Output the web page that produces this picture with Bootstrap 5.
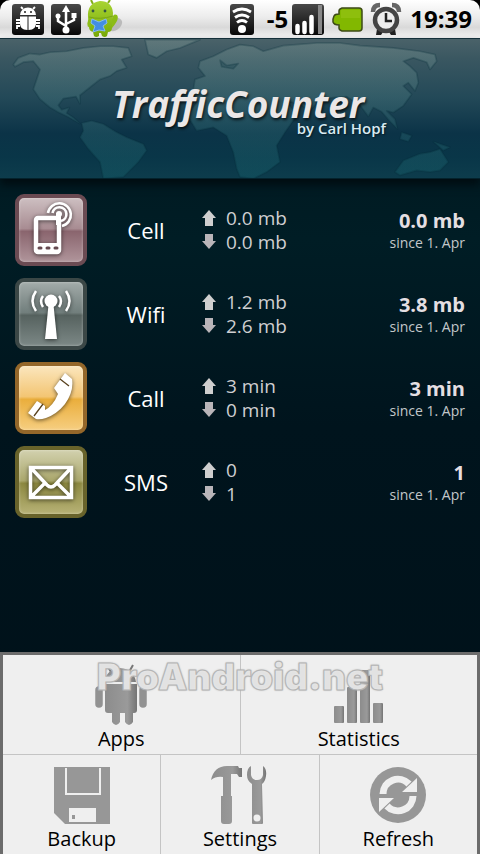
<!DOCTYPE html>
<html lang="en">
<head>
<meta charset="utf-8">
<meta name="viewport" content="width=device-width, initial-scale=1">
<title>TrafficCounter</title>
<link href="https://cdn.jsdelivr.net/npm/bootstrap@5.3.0/dist/css/bootstrap.min.css" rel="stylesheet">
<style>
body{font-family:"Open Sans","Noto Sans",sans-serif;background:#000}
.app-screen{background:linear-gradient(#00141b 0,#001d25 28%,#00141d 50%,#001018 100%)}
.status-strip{background:linear-gradient(#fff,#ececec 45%,#d9d9d9 72%,#f4f4f4);border-radius:10px 10px 0 0;height:38px;color:#000;padding:0 8px 0 11px}
.status-strip svg{display:block;flex:none}
.status-num{font-size:24px;font-weight:700;line-height:36px}
.hero{height:141px;background:linear-gradient(#4a6269 0,#3a5761 14%,#234958 42%,#0b3347 68%,#093648 85%,#0d3c4c 100%);border-top:1px solid #14303a;border-bottom:1px solid #04222c;box-shadow:0 6px 8px #000d12}
.hero-map{position:absolute;inset:0;width:100%;height:100%}
.hero-title{font-size:37px;line-height:40px;font-weight:700;font-style:italic;color:#ebe7e7;text-shadow:1px 2px 3px #000b}
.hero-by{font-size:15px;line-height:8px;font-weight:600;color:#d8eaf2;text-shadow:1px 1px 2px #0008}
.hero-block{padding:45px 0 0 14px}
.hero-inner{width:278px}
.meters{padding:15px 15px 0}
.meter{height:72px;margin-bottom:12px}
.tile{width:72px;height:72px;border-radius:9px;border:4px solid;flex:none}
.tile svg{display:block;filter:drop-shadow(0 1px 2px #0009)}
.tile-cell{border-color:#6b4b53;background:linear-gradient(#cdbfc1,#a88c92 48%,#8a656e 52%,#b0959b)}
.tile-wifi{border-color:#3b4746;background:linear-gradient(#a2aba9,#717e7c 48%,#56625f 52%,#7c8886)}
.tile-call{border-color:#94672a;background:linear-gradient(#fbe6bd,#f3c573 48%,#eaae3c 52%,#f6ce80)}
.tile-sms{border-color:#68632b;background:linear-gradient(#d2d1ae,#aaa76c 48%,#8c8840 52%,#b7b276)}
.tile-cell,.tile-wifi,.tile-call,.tile-sms{background-clip:border-box;box-shadow:inset 0 0 3px #fff6}
.meter-name{width:114px;padding-left:4px;font-size:22px;color:#fff}
.meter-io{font-size:19px;line-height:24px;color:#cfcfd1}
.io-line{gap:9px}
.meter-total{font-size:20px;line-height:24px;font-weight:700;color:#e4dfe2}
.meter-since{font-size:14px;line-height:20px;color:#c3c7ca}
.meter-sum{padding-top:2px}
.options{background:#efefef;border:3px solid #6c6c6c;border-bottom:0}
.option{height:99px;border:0;background:none;font-size:20px;line-height:26px;color:#000;padding:6px 0 0;flex:1 1 0}
.option + .option{border-left:1px solid #c4c4c4}
.option-row + .option-row{border-top:1px solid #c4c4c4}
.option svg{display:block;margin:0 auto 1px}
.stamp{position:absolute;top:-4px;left:0;right:0;text-align:center;font-family:Inter,"Open Sans",sans-serif;font-size:37px;line-height:52px;font-weight:900;color:#f4f4f4d0;-webkit-text-stroke:1px #b4b4b4;text-shadow:0 0 2px #999;pointer-events:none}
</style>
<script src="https://cdn.jsdelivr.net/npm/bootstrap@5.3.0/dist/js/bootstrap.bundle.min.js"></script>
</head>
<body>
<svg width="0" height="0" class="position-absolute" aria-hidden="true">
<defs>
<linearGradient id="dark" x2="0" y2="1"><stop stop-color="#484848"/><stop offset="1" stop-color="#080808"/></linearGradient>
<linearGradient id="leaf" x2="0" y2="1"><stop stop-color="#a8d432"/><stop offset="1" stop-color="#78aa08"/></linearGradient>
<linearGradient id="steel" x2="1" y2="0"><stop stop-color="#8c8c8c"/><stop offset=".7" stop-color="#9a9a9a"/><stop offset="1" stop-color="#747474"/></linearGradient>
<symbol id="arrow-up" viewBox="0 0 16 18"><path d="M8 1 15 9H12V17H4V9H1Z" fill="#cfcfcf"/></symbol>
<symbol id="arrow-down" viewBox="0 0 16 18"><path d="M8 16 15 8H12V1H4V8H1Z" fill="#b9b5b9"/></symbol>
</defs>
</svg>
<div class="app-screen min-vh-100 d-flex flex-column">
<div class="bg-black">
<div class="status-strip d-flex align-items-center">
<svg width="34" height="34" viewBox="0 0 34 34"><rect x="1" y="2" width="32" height="31" rx="3" fill="url(#dark)"/><path d="M9 13a8 7.500 0 0 1 16 0zM9 14.500h7.500V28C11 28 9 25 9 21zM17.500 14.500H25V21c0 4-2 7-7.500 7z" fill="#fff"/><path d="m12 7-2-2m12 2 2-2M9 18H5m4 3H5m4 3H6v3m19-9h4m-4 3h4m-4 3h3v3" stroke="#fff" stroke-width="1.800" fill="none"/><path d="M13 10h2m4 0h2" stroke="#222" stroke-width="1.500"/></svg>
<svg class="ms-1" width="34" height="34" viewBox="0 0 34 34"><rect x="2" y="2" width="30" height="31" rx="3" fill="url(#dark)"/><path d="M17 28V9M17 24l-8-5v-5m8 8 8-4v-4" stroke="#fff" stroke-width="2.500" fill="none"/><path d="m17 3 4 7h-8z" fill="#fff"/><circle cx="17" cy="28" r="3.500" fill="#fff"/><circle cx="9" cy="14" r="2.500" fill="#fff"/><path d="M22.500 11h5v5h-5z" fill="#fff"/></svg>
<svg class="ms-1" width="40" height="38" viewBox="0 0 40 38"><path d="M28 17q10 2 6 9-4 6-10 5z" fill="#aaa" opacity=".7"/><path d="m6 4-2-4m17 3 2-3" stroke="#82ae17" stroke-width="2"/><path d="M1 17Q0 3 13 1q12 0 13 12l-1 15q0 4-4 4l-1 4q-2 2-5 0l-1-3h-2v3q-3 2-5 0l-1-4q-4-1-4-5z" fill="url(#leaf)"/><path d="M25 19q1-6 5-4 3 4-5 13M3 18q-4 3-2 9l3-1" fill="#8cbc16"/><circle cx="6" cy="11" r="1.400" fill="#354"/><circle cx="18" cy="11" r="1.400" fill="#354"/><path d="M2 17q11 3 24-1" stroke="#79a516" fill="none"/><path d="m5 19 7 3 7-3 1 4-4 3 2 5-6-1-6 2 2-6-4-3z" fill="#438ee4" stroke="#86bcf0"/></svg>
<div class="ms-auto d-flex align-items-center">
<svg width="26" height="34" viewBox="0 0 26 34"><rect x="1" y="2" width="24" height="31" rx="3" fill="url(#dark)"/><path d="M4 10q9-6 18 0M6 15.500q7-5 14 0M8 20.500q5-4 10 0" stroke="#fff" stroke-width="2.800" fill="none"/><circle cx="13" cy="27" r="4" fill="#fff"/></svg>
<span class="status-num ps-2 ms-1">-5</span>
<svg class="ms-1" width="34" height="34" viewBox="0 0 34 34"><rect x="0" y="2" width="32" height="31" rx="3" fill="url(#dark)"/><path d="M26 3h4v29h-4z" fill="#888"/><path d="M5.500 30v-6m7 6V21m7 9V15" stroke="#fff" stroke-width="4.500" stroke-linecap="round"/></svg>
<svg class="ms-1" width="36" height="34" viewBox="0 0 36 34"><path d="M9 9q0-2 3-3h17q3 0 3 3v17q0 3-3 3H12q-3-1-3-3v-3q-5 0-6-3v-3l1-3q1-2 5-2z" fill="#82b800" stroke="#3d4a16" stroke-width="1.500"/><path d="M11 8h19v8H11z" fill="#a0cb20" opacity=".4"/></svg>
<svg class="ms-1" width="32" height="36" viewBox="0 0 32 36"><path d="M3 11Q3 4 10 4M22 4q7 0 7 7" stroke="#666" stroke-width="4.500" fill="none"/><path d="m7 28-1 6h5l2-3m12-3 1 6h-5l-2-3" fill="#222"/><circle cx="16" cy="19" r="11" fill="#eee" stroke="#444" stroke-width="4.500"/><path d="M16 12v8h6" stroke="#222" stroke-width="2.500" fill="none"/></svg>
<span class="status-num ms-2">19:39</span>
</div>
</div>
</div>
<header class="hero position-relative flex-shrink-0 d-flex justify-content-center">
<svg class="hero-map" viewBox="0 0 480 140" preserveAspectRatio="none" aria-hidden="true">
<defs><linearGradient id="land" gradientUnits="userSpaceOnUse" x1="0" y1="0" x2="0" y2="430"><stop stop-color="#8aa09c" stop-opacity=".36"/><stop offset=".5" stop-color="#4a8085" stop-opacity=".3"/><stop offset="1" stop-color="#1c7a82" stop-opacity=".24"/></linearGradient></defs>
<g transform="scale(.33333) translate(0 -8)" fill="url(#land)" stroke="#052a38" stroke-opacity=".25" stroke-width="5" stroke-linejoin="round">
<path d="M40 85 55 65 90 52 120 55 150 48 200 45 250 35 300 30 340 30 385 35 395 60 365 70 380 95 350 105 330 120 300 130 275 150 240 178 240 204 228 182 190 188 175 208 185 222 208 215 200 232 220 245 240 264 205 244 175 229 150 215 120 190 100 160 110 130 120 100 100 75 70 78 45 92Z"/>
<path d="M245 262 275 255 310 265 350 290 380 305 430 325 440 345 415 380 395 400 370 425 310 430 300 380 265 340 240 305 250 285Z"/>
<path d="M435 10H600L540 35 500 45 470 65 445 55Z"/>
<path d="M580 160 585 130 615 120 595 95 600 75 640 60 680 40 720 25 760 30 790 45 850 28 950 20 1020 20 1080 28 1180 35 1260 45 1305 55 1310 75 1290 100 1280 78 1240 65 1210 75 1230 90 1250 110 1255 140 1245 165 1225 140 1210 150 1235 175 1210 210 1180 230 1160 225 1185 250 1192 280 1168 255 1145 228 1120 215 1105 242 1080 208 1040 182 1000 185 960 190 930 225 900 205 860 195 890 240 855 290 830 330 840 380 800 410 760 430 720 425 710 400 700 350 680 300 640 275 590 285 562 240 590 200Z"/>
<path d="M1185 410 1210 375 1260 355 1290 350 1320 340 1345 380 1320 405 1290 410 1250 405 1200 420ZM1205 290 1235 300 1225 318 1200 310ZM1300 318 1350 335 1330 345Z"/>
<path d="M660 72 680 88 715 82 700 98 665 92Z" fill="#0b3442" fill-opacity=".3"/>
</g>
</svg>
<div class="hero-block position-relative">
<div class="hero-inner">
<h1 class="hero-title m-0 ps-1">TrafficCounter</h1>
<div class="hero-by text-end">by Carl Hopf</div>
</div>
</div>
</header>
<main class="meters flex-grow-1">
<section class="meter d-flex align-items-center">
<div class="tile tile-cell"><svg width="64" height="64" viewBox="0 0 64 64"><rect x="17" y="20" width="23" height="34" rx="2" fill="none" stroke="#fff" stroke-width="4.500"/><path d="M17 45h23v10H17z" fill="#fff"/><path d="M37 15h5v12h-5z" fill="#fff"/><circle cx="40" cy="16" r="3" fill="#fff"/><path d="M33.500 15A7 7 0 1 1 42 23M29 15A11.500 11.500 0 1 1 43 28" fill="none" stroke="#fff" stroke-width="2.600"/><path d="M20 50h2m6 0h2m6 0h2" stroke="#65494f" stroke-width="3" stroke-linecap="round"/></svg></div>
<div class="meter-name text-center flex-shrink-0">Cell</div>
<div class="meter-io flex-grow-1"><div class="io-line d-flex align-items-center"><svg width="16" height="18"><use href="#arrow-up"/></svg>0.0 mb</div><div class="io-line d-flex align-items-center"><svg width="16" height="18"><use href="#arrow-down"/></svg>0.0 mb</div></div>
<div class="meter-sum text-end"><div class="meter-total">0.0 mb</div><div class="meter-since">since 1. Apr</div></div>
</section>
<section class="meter d-flex align-items-center">
<div class="tile tile-wifi"><svg width="64" height="64" viewBox="0 0 64 64"><circle cx="32" cy="19" r="6.500" fill="#fff"/><path d="M29.500 23h5L38 57H26z" fill="#fff"/><path d="M24 14q-4 5 0 11m16-11q4 5 0 11M17 9q-7 10 0 20M47 9q7 10 0 20" fill="none" stroke="#fff" stroke-width="2.500"/></svg></div>
<div class="meter-name text-center flex-shrink-0">Wifi</div>
<div class="meter-io flex-grow-1"><div class="io-line d-flex align-items-center"><svg width="16" height="18"><use href="#arrow-up"/></svg>1.2 mb</div><div class="io-line d-flex align-items-center"><svg width="16" height="18"><use href="#arrow-down"/></svg>2.6 mb</div></div>
<div class="meter-sum text-end"><div class="meter-total">3.8 mb</div><div class="meter-since">since 1. Apr</div></div>
</section>
<section class="meter d-flex align-items-center">
<div class="tile tile-call"><svg width="64" height="64" viewBox="0 0 64 64"><path d="m46 7 7 6q2 12-7 25-8 10-19 14-6 2-10 1L9 47l9-12 8 5v4q8-4 13-16l-4-6Z" fill="#fff"/><path d="m41 13 9 7M15 50l9-12" stroke="#5a4320" stroke-width="1.300"/></svg></div>
<div class="meter-name text-center flex-shrink-0">Call</div>
<div class="meter-io flex-grow-1"><div class="io-line d-flex align-items-center"><svg width="16" height="18"><use href="#arrow-up"/></svg>3 min</div><div class="io-line d-flex align-items-center"><svg width="16" height="18"><use href="#arrow-down"/></svg>0 min</div></div>
<div class="meter-sum text-end"><div class="meter-total">3 min</div><div class="meter-since">since 1. Apr</div></div>
</section>
<section class="meter d-flex align-items-center">
<div class="tile tile-sms"><svg width="64" height="64" viewBox="0 0 64 64"><path d="M11.500 17.500h41v30h-41zM12 18l16 17q4 4 8 0l16-17M12 47l14-14m26 14L38 33" fill="none" stroke="#fff" stroke-width="3.500"/></svg></div>
<div class="meter-name text-center flex-shrink-0">SMS</div>
<div class="meter-io flex-grow-1"><div class="io-line d-flex align-items-center"><svg width="16" height="18"><use href="#arrow-up"/></svg>0</div><div class="io-line d-flex align-items-center"><svg width="16" height="18"><use href="#arrow-down"/></svg>1</div></div>
<div class="meter-sum text-end"><div class="meter-total">1</div><div class="meter-since">since 1. Apr</div></div>
</section>
</main>
<nav class="options position-relative" aria-label="Options">
<div class="option-row d-flex">
<button type="button" class="option"><svg width="60" height="62" viewBox="0 0 60 62"><path d="m20 9-4-7m22 7 4-7" stroke="#777" stroke-width="2"/><path d="M14 19Q15 6 29 5q14 1 16 14zM14 21h32v26q0 3-3 3h-1v9q-4 6-8 0v-9h-5v9q-4 6-8 0v-9h-4q-3 0-3-3z" fill="url(#steel)"/><path d="M8 27v14m44-14v14" stroke="#929292" stroke-width="7.500" stroke-linecap="round"/></svg>Apps</button>
<button type="button" class="option"><svg width="60" height="62" viewBox="0 0 60 62"><g fill="url(#steel)"><rect x="5" y="43" width="10" height="17" rx="1"/><rect x="18" y="24" width="10" height="36" rx="1"/><rect x="31" y="7" width="10" height="53" rx="1"/><rect x="44" y="40" width="10" height="20" rx="1"/></g></svg>Statistics</button>
</div>
<div class="option-row d-flex">
<button type="button" class="option"><svg width="60" height="62" viewBox="0 0 60 62"><path d="M2 4h56v57H13L2 50z" fill="#979797"/><path d="M14 5v26h34V5" fill="none" stroke="#efefef" stroke-width="2"/><path d="M17 45h27v14H17z" fill="#efefef"/><path d="M20 52h3v4h-3z" fill="#979797"/></svg>Backup</button>
<button type="button" class="option"><svg width="60" height="62" viewBox="0 0 60 62"><path d="M1 17Q4 3 17 3h11l1 2h3v9h-3l-2-3h-6v22h1v25q0 3-3 3h-5q-3 0-3-3V33h2V14Q6 13 1 17z" fill="url(#steel)"/><path d="M41 3v9q1 5 6 5t6-5V3q4 3 3 10-1 6-4 8l1 39q0 1-1 1h-9q-1 0-1-1V21q-5-3-5-9 0-7 4-9z" fill="url(#steel)"/><circle cx="47" cy="55" r="3.500" fill="#efefef"/></svg>Settings</button>
<button type="button" class="option"><svg width="60" height="62" viewBox="0 0 60 62"><circle cx="30" cy="32" r="28" fill="#979797"/><path d="M15 31A15 15 0 0 1 41 21M45 33A15 15 0 0 1 19 43" fill="none" stroke="#efefef" stroke-width="7"/><path d="M49 15v14H34zM11 49V35h15z" fill="#efefef"/></svg>Refresh</button>
</div>
<div class="stamp">ProAndroid.net</div>
</nav>
</div>
</body>
</html>
